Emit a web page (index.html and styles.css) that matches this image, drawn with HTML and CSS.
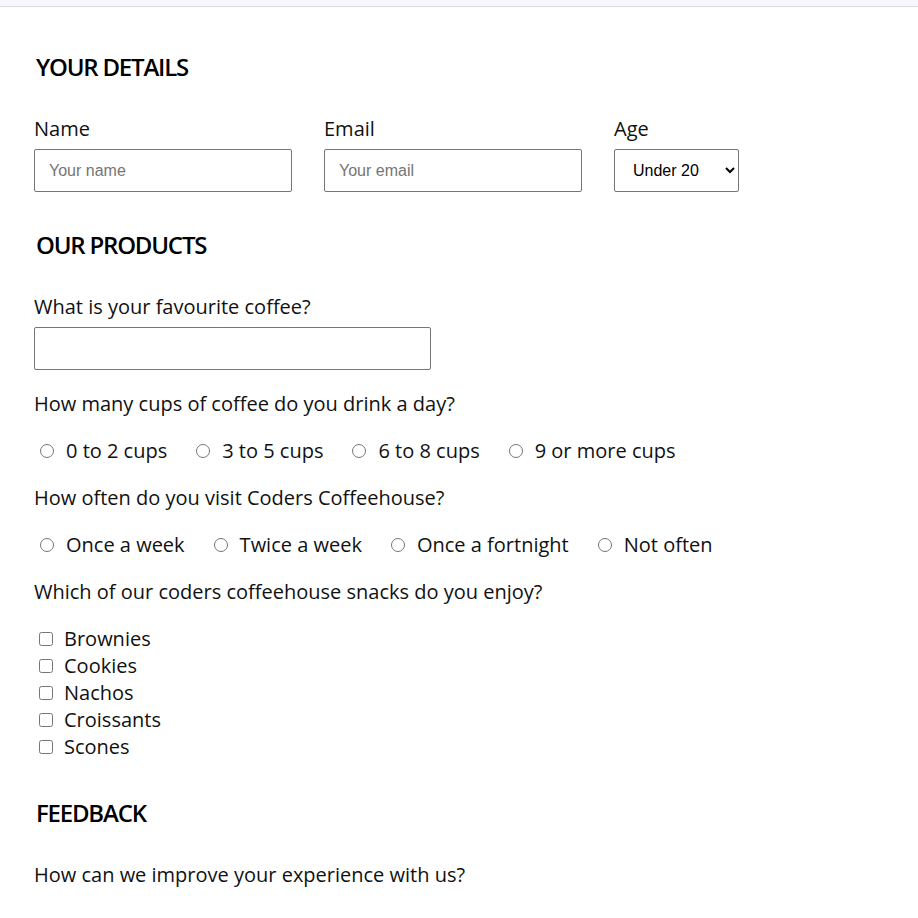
FILE: index.html
```html
<!DOCTYPE html>
<html lang="en">
<head>
<meta charset="utf-8">
<title>Coders Coffeehouse Survey</title>
<link rel="stylesheet" href="styles.css">
</head>
<body>
<div class="topbar"></div>
<form class="survey">
  <h2 class="section-title">YOUR DETAILS</h2>
  <div class="details-row">
    <div class="field">
      <label class="field-label" for="name">Name</label>
      <input class="text-input short" type="text" id="name" placeholder="Your name">
    </div>
    <div class="field">
      <label class="field-label" for="email">Email</label>
      <input class="text-input short" type="email" id="email" placeholder="Your email">
    </div>
    <div class="field">
      <label class="field-label" for="age">Age</label>
      <select class="select-input" id="age">
        <option>Under 20</option>
        <option>20 to 35</option>
        <option>36 to 50</option>
        <option>Over 50</option>
      </select>
    </div>
  </div>

  <h2 class="section-title">OUR PRODUCTS</h2>
  <label class="field-label" for="fav">What is your favourite coffee?</label>
  <input class="text-input long" type="text" id="fav">

  <p class="question">How many cups of coffee do you drink a day?</p>
  <div class="options">
    <label class="option"><input type="radio" name="cups">0 to 2 cups</label><label class="option"><input type="radio" name="cups">3 to 5 cups</label><label class="option"><input type="radio" name="cups">6 to 8 cups</label><label class="option"><input type="radio" name="cups">9 or more cups</label>
  </div>

  <p class="question">How often do you visit Coders Coffeehouse?</p>
  <div class="options">
    <label class="option"><input type="radio" name="visit">Once a week</label><label class="option"><input type="radio" name="visit">Twice a week</label><label class="option"><input type="radio" name="visit">Once a fortnight</label><label class="option"><input type="radio" name="visit">Not often</label>
  </div>

  <p class="question">Which of our coders coffeehouse snacks do you enjoy?</p>
  <div class="checks">
    <label class="check"><input type="checkbox">Brownies</label>
    <label class="check"><input type="checkbox">Cookies</label>
    <label class="check"><input type="checkbox">Nachos</label>
    <label class="check"><input type="checkbox">Croissants</label>
    <label class="check"><input type="checkbox">Scones</label>
  </div>

  <h2 class="section-title">FEEDBACK</h2>
  <label class="field-label" for="improve">How can we improve your experience with us?</label>
</form>
</body>
</html>
```

FILE: styles.css
```css
html, body {
  margin: 0;
  padding: 0;
  background: #ffffff;
}

body {
  font-family: "Open Sans", "Noto Sans", sans-serif;
  font-size: 20px;
  line-height: 27px;
  color: #111111;
}

.topbar {
  height: 6px;
  background: #f8f7fd;
  border-bottom: 1px solid #dcdce3;
}

.survey {
  padding: 7px 34px 0;
}

.section-title {
  font-size: 24px;
  font-weight: 600;
  line-height: normal;
  letter-spacing: -1.2px;
  color: #000000;
  margin: 36px 0 32px 2px;
}

.details-row {
  display: flex;
  gap: 32px;
}

.field {
  display: flex;
  flex-direction: column;
  align-items: flex-start;
}

.field-label {
  display: block;
  margin-bottom: 7px;
}

.text-input {
  box-sizing: border-box;
  height: 43px;
  border: 1px solid #767676;
  border-radius: 2px;
  padding: 0 14px;
  font-family: "Liberation Sans", Arial, sans-serif;
  font-size: 16px;
  color: #111111;
  background: #ffffff;
  margin: 0;
  display: block;
}

.text-input::placeholder {
  color: #757575;
}

.text-input.short {
  width: 258px;
}

.text-input.long {
  width: 397px;
  margin-bottom: 20px;
}

.select-input {
  box-sizing: border-box;
  width: 125px;
  height: 43px;
  border: 1px solid #767676;
  border-radius: 2px;
  padding: 0 0 0 14px;
  font-family: "Liberation Sans", Arial, sans-serif;
  font-size: 16px;
  color: #000000;
  background: #ffffff;
  margin: 0;
}

.question {
  margin: 0 0 20px;
}

.options {
  margin-bottom: 20px;
}

.option {
  margin-right: 23px;
}

.option input {
  width: 14px;
  height: 14px;
  margin: 3px 12px 0 6px;
}

.check {
  display: block;
}

.check input {
  width: 14px;
  height: 14px;
  margin: 3px 11px 3px 5px;
}
```
